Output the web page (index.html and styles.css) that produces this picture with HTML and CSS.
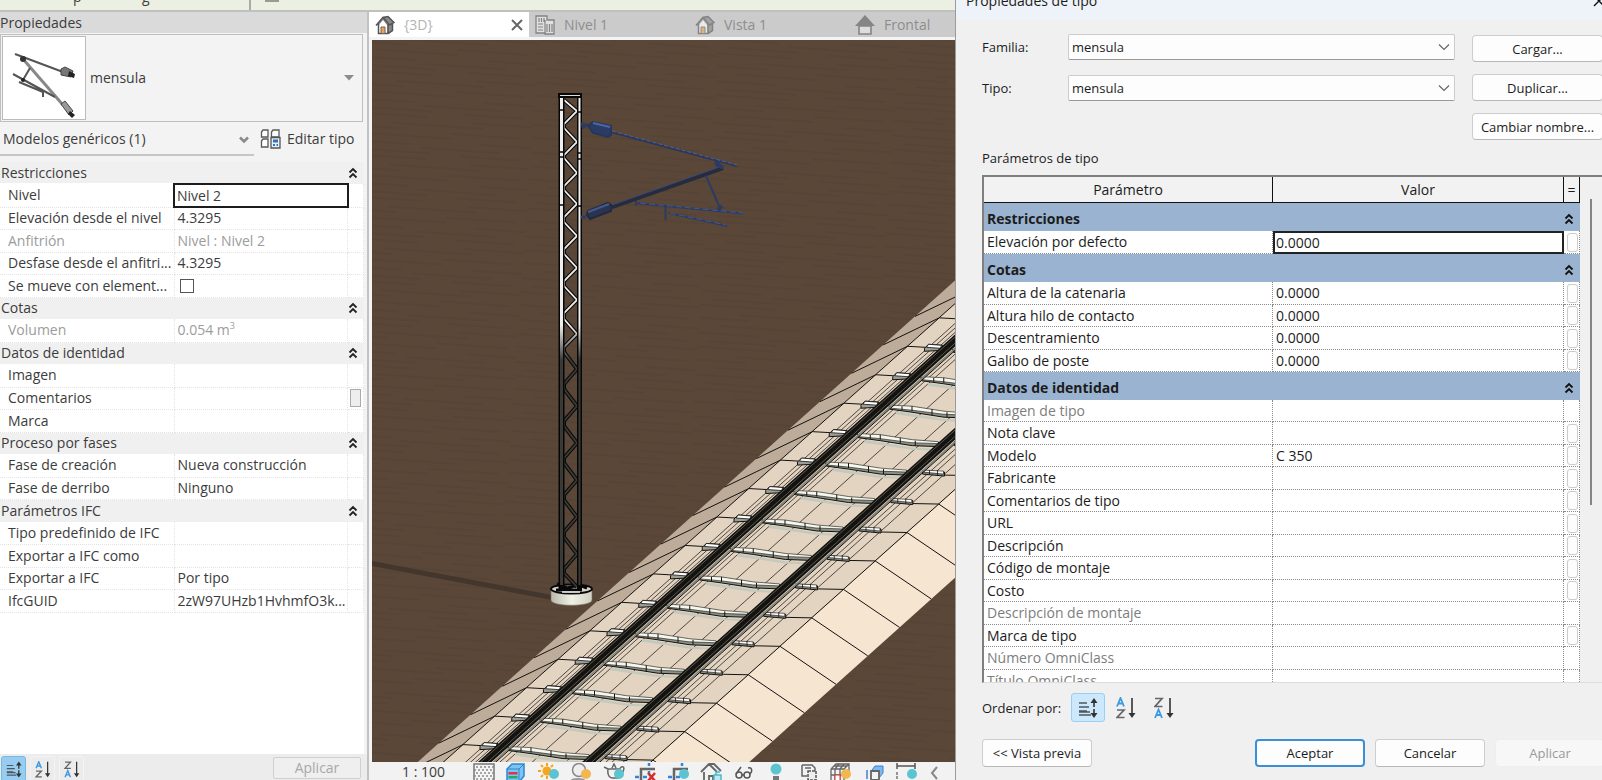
FILE: index.html
```html
<!DOCTYPE html>
<html lang="es">
<head>
<meta charset="utf-8">
<title>Propiedades de tipo</title>
<link rel="stylesheet" href="styles.css">
</head>
<body>
<svg class="defs" aria-hidden="true">
  <symbol id="i-collapse" viewBox="0 0 10 12"><path d="M1.500 5.500 5 2l3.500 3.500M1.500 10.500 5 7l3.500 3.500" fill="none" stroke="currentColor" stroke-width="1.800"/></symbol>
  <symbol id="i-chev" viewBox="0 0 12 8"><path d="M1 1.500 6 6.500 11 1.500" fill="none" stroke="currentColor" stroke-width="1.200"/></symbol>
  <symbol id="i-house" viewBox="0 0 20 20"><path d="M1 10 8 2l5-1 6 6-1.500 1v8L14 19H3V10z" fill="#8a8a8a"/><path d="M3.500 10.500 8 5l4.500 5.500V18h-9z" fill="#fff"/><path d="M1 10.500 8 2.500l6.500 7.500M3.500 9v9.500H13V9M8 2.500 13 1.500 19 7.500l-4.500 2.500M13 18.500l4.500-3V9" fill="none" stroke="#555" stroke-width="1.500"/><path d="M6 12h4v6.500H6z" fill="#f3a04c" stroke="#666"/></symbol>
  <symbol id="i-sort" viewBox="0 0 20 20"><path d="M1 5h8M1 9h10M1 13h8M1 17h12M1 14h11" stroke="#50565c" stroke-width="1.500"/><path d="M16 2v7M16 11v7" stroke="#333" stroke-width="1.600"/><path d="M16 0l3.500 5h-7zM16 20l3.500-5h-7z" fill="#333"/></symbol>
  <symbol id="i-az" viewBox="0 0 20 22"><path d="M1 9.500 4.500 1 8 9.500M2.200 6.500h4.600" fill="none" stroke="#3b9be0" stroke-width="1.800"/><path d="M1 13h7L1 20.500h7.500" fill="none" stroke="#666" stroke-width="1.700"/><path d="M16 1v17" stroke="#333" stroke-width="1.600"/><path d="M16 21l3.500-5h-7z" fill="#333"/></symbol>
  <symbol id="i-za" viewBox="0 0 20 22"><path d="M1 1.500h7L1 9.500h7.500" fill="none" stroke="#666" stroke-width="1.700"/><path d="M1 21 4.500 12.500 8 21M2.200 18h4.600" fill="none" stroke="#3b9be0" stroke-width="1.800"/><path d="M16 1v17" stroke="#333" stroke-width="1.600"/><path d="M16 21l3.500-5h-7z" fill="#333"/></symbol>
</svg>

<main class="screen">
  <div class="app">
    <div class="ribbon"><span class="ribbon-text">p</span><span class="ribbon-text">g</span><i class="ribbon-sep"></i><i class="ribbon-mark"></i></div>

    <section class="props">
      <h2 class="props-title">Propiedades</h2>
      <button class="type-picker">
        <svg class="thumb" viewBox="0 0 82 82"><g fill="none" stroke="#777" stroke-width="2"><path d="M12 17 60 35" stroke="#555"/><path d="M20 22 60 68" stroke="#888" stroke-width="3"/><path d="M27 31 20 43M10 37 52 60M16 45 40 55v5" stroke="#555"/></g><path d="m58 32 4-2 8 4-2 6-10-2z" fill="#777" stroke="#444"/><path d="m66 34 6 3-1 4-6-2z" fill="#222"/><path d="m58 67 4-3 8 10-4 4z" fill="#999" stroke="#444"/><path d="m67 74 5 4-3 3-4-4z" fill="#222"/><circle cx="20" cy="22" r="3" fill="#333"/><circle cx="20" cy="43" r="2" fill="#222"/></svg>
        <span class="type-name">mensula</span>
        <svg class="tri" viewBox="0 0 10 6"><path d="M0 0h10L5 5.500z" fill="#8c8c8c"/></svg>
      </button>
      <div class="filter-row">
        <div class="filter"><select aria-label="Filtro de elementos"><option>Modelos genéricos (1)</option></select><svg class="filter-arrow" viewBox="0 0 12 8"><path d="M2 1.500 6 5.500 10 1.500" fill="none" stroke="#8a8a8a" stroke-width="2.600"/></svg></div>
        <button class="edit-type"><svg viewBox="0 0 21 20"><g fill="#fff" stroke="#5a5a5a" stroke-width="1.300"><path d="M1.500 3 3 1h5v7H1.500zM11.500 3 13 1h6v7h-7.500zM1.500 12 3 10h5v8H1.500z"/></g><path d="M11 8.500h9V19h-9z" fill="#eee" stroke="#555" stroke-width="1.300"/><path d="M13 10.500h5v3h-5z" fill="#2674c4"/><path d="M13 15h2v2h-2zM16.500 15h1.500v2h-1.500z" fill="#2674c4"/></svg>Editar tipo</button>
      </div>

      <div class="props-body">
      <table class="grid">
        <colgroup><col class="c-name"><col><col class="c-btn"></colgroup>
        <tr class="sec"><th colspan="2">Restricciones</th><td><svg><use href="#i-collapse"/></svg></td></tr>
        <tr><th>Nivel</th><td class="boxed"><input value="Nivel 2" aria-label="Nivel"></td><td></td></tr>
        <tr><th>Elevación desde el nivel</th><td>4.3295</td><td></td></tr>
        <tr class="off"><th>Anfitrión</th><td>Nivel : Nivel 2</td><td></td></tr>
        <tr><th>Desfase desde el anfitri...</th><td>4.3295</td><td></td></tr>
        <tr><th>Se mueve con element...</th><td class="tick"><input type="checkbox" aria-label="Se mueve con elementos"></td><td></td></tr>
        <tr class="sec"><th colspan="2">Cotas</th><td><svg><use href="#i-collapse"/></svg></td></tr>
        <tr class="off"><th>Volumen</th><td>0.054 m<sup>3</sup></td><td></td></tr>
        <tr class="sec"><th colspan="2">Datos de identidad</th><td><svg><use href="#i-collapse"/></svg></td></tr>
        <tr><th>Imagen</th><td></td><td></td></tr>
        <tr><th>Comentarios</th><td></td><td><button class="assoc" aria-label="Asociar"></button></td></tr>
        <tr><th>Marca</th><td></td><td></td></tr>
        <tr class="sec"><th colspan="2">Proceso por fases</th><td><svg><use href="#i-collapse"/></svg></td></tr>
        <tr><th>Fase de creación</th><td>Nueva construcción</td><td></td></tr>
        <tr><th>Fase de derribo</th><td>Ninguno</td><td></td></tr>
        <tr class="sec"><th colspan="2">Parámetros IFC</th><td><svg><use href="#i-collapse"/></svg></td></tr>
        <tr><th>Tipo predefinido de IFC</th><td></td><td></td></tr>
        <tr><th>Exportar a IFC como</th><td></td><td></td></tr>
        <tr><th>Exportar a IFC</th><td>Por tipo</td><td></td></tr>
        <tr><th>IfcGUID</th><td>2zW97UHzb1HvhmfO3k...</td><td></td></tr>
      </table>
      </div>
      <footer class="props-foot">
        <button class="sort on" aria-label="Sin ordenar"><svg><use href="#i-sort"/></svg></button>
        <button class="sort" aria-label="Ascendente"><svg><use href="#i-az"/></svg></button>
        <button class="sort" aria-label="Descendente"><svg><use href="#i-za"/></svg></button>
        <button class="apply" disabled>Aplicar</button>
      </footer>
    </section>

    <section class="view">
      <nav class="tabs">
        <a class="tab active" href="#v3d"><svg><use href="#i-house"/></svg><span>{3D}</span><svg class="close" viewBox="0 0 12 12"><path d="M1 1l10 10M11 1 1 11" stroke="#666" stroke-width="2"/></svg></a>
        <a class="tab" href="#nivel"><svg class="dim" viewBox="0 0 20 20"><path d="M1 1h11v4h7v14H10v-1H1z" fill="#eee" stroke="#555" stroke-width="1.300"/><path d="M4 3v4M6.500 3v4M9 3v4M3 9h5M3 12h5M3 15h5M12 9v8M14.500 9v8M17 9v8M10 5v13" stroke="#555" stroke-width="1.200"/></svg><span>Nivel 1</span></a>
        <a class="tab" href="#vista"><svg class="dim"><use href="#i-house"/></svg><span>Vista 1</span></a>
        <a class="tab" href="#frontal"><svg viewBox="0 0 20 20"><path d="M10 0 20 11H0z" fill="#858585"/><path d="M4 11h12v8H4z" fill="#ddd" stroke="#858585" stroke-width="1.600"/></svg><span>Frontal</span></a>
      </nav>
      <svg class="scene" viewBox="372 40 583 722" preserveAspectRatio="xMinYMin slice" role="img" aria-label="Vista 3D de la vía y el poste">
        <defs>
          <pattern id="soil" width="180" height="42" patternUnits="userSpaceOnUse" patternTransform="rotate(4)"><path fill="#5a4738" d="M0 0h180v42H0z"/><path d="M0 3h75M120 6h60M40 11h90M0 16h50M100 18h70M20 23h80M130 27h50M0 31h60M70 34h80M10 39h70M110 40h60" stroke="#56443500" stroke-width="2"/><path d="M0 3h75M120 6h60M40 11h90M0 16h50M100 18h70M20 23h80M130 27h50M0 31h60M70 34h80M10 39h70M110 40h60" stroke="#554335" stroke-width="1.500"/></pattern>
          <linearGradient id="steel" gradientUnits="userSpaceOnUse" x1="0" y1="325" x2="0" y2="360"><stop offset="0" stop-color="#eee"/><stop offset="1" stop-color="#3a3a36"/></linearGradient>
          <linearGradient id="base" x1="0" x2="1" y1="0" y2="0"><stop offset="0" stop-color="#b9b8ab"/><stop offset=".5" stop-color="#f1f0e6"/><stop offset="1" stop-color="#d0cfc2"/></linearGradient>
          <path id="par" d="M318-285-318 285"/>
          <g id="tile" stroke="#15120f" stroke-width="1">
            <path d="M-56 27 0 0l-32 28.500M0 0l18 1M164 15l26 .5-32 28.500M190 15.500l56 38" fill="none"/>
            <path d="M52 8l50 8 24 1v2l-26-1-48-7z" fill="#c4c9bd" stroke="none"/>
            <path d="m17 2 4-4 14 1v5l-18 1z" fill="#9a9e94"/><path d="m21-2 13 1-1 3-14-1z" fill="#fff" stroke-width=".8"/>
            <path d="m45 3 23 1 32 5 27 2v4l-27-1-32-5-22-3z" fill="#8c9188"/><path d="m47 2 21 1 32 5 26 2v2l-27-1-31-4-21-2z" fill="#f4f8ee" stroke-width=".6"/><path d="M68 3v5M88 6v6M103 9v5M58 3v4" fill="none"/>
          </g>
          <g id="clip" stroke="#15120f">
            <path d="m142 10 22 2v4l-22-2z" fill="#858a80"/><path d="m144 10 19 1v3l-20-2z" fill="#fafafa" stroke-width=".6"/><path d="M149 10v4M157 10v5" fill="none" stroke-width=".8"/>
          </g>
          <g id="row"><use href="#tile"/><use href="#clip"/></g>
          <g id="rows4"><use href="#row"/><use href="#row" transform="translate(-31.750 28.450)"/><use href="#row" transform="translate(-63.500 56.900)"/><use href="#row" transform="translate(-95.250 85.350)"/></g>
        </defs>
        <path fill="url(#soil)" d="M372 40h1400v1200H372z"/>
        <path d="M372 561 552 595v5L372 566z" fill="#43362d"/>
        <g transform="translate(717 517)">
          <path d="M262-258-374 312h56L318-285z" fill="#bdac9a"/>
          <path d="M318-285-318 285l190 15.500L508-269.500z" fill="#e3d4c2"/>
          <path d="M508-269.500-128 300.500l56 38L564-231.500z" fill="#f5e5d1"/>
          <g fill="none" stroke="#2b2520" stroke-width=".8">
            <use href="#par" x="21" y="1"/><use href="#par" x="26" y="1"/><use href="#par" x="31" y="1"/>
            <use href="#par" x="53" y="3"/><use href="#par" x="58" y="4"/><use href="#par" x="82" y="6"/><use href="#par" x="112" y="9"/>
            <use href="#par" x="149" y="12"/><use href="#par" x="154" y="13"/><use href="#par" x="164" y="14"/>
          </g>
          <use href="#rows4" transform="translate(254 -227.600)"/><use href="#rows4" transform="translate(127 -113.800)"/><use href="#rows4"/><use href="#rows4" transform="translate(-127 113.800)"/><use href="#rows4" transform="translate(-254 227.600)"/>
          <g fill="none">
            <g stroke="#14130f" stroke-width="9"><use href="#par" x="40" y="1"/><use href="#par" x="134" y="10"/></g>
            <g stroke="#6a6b60" stroke-width=".8"><use href="#par" x="36" y="1"/><use href="#par" x="43" y="1"/><use href="#par" x="130" y="10"/><use href="#par" x="137" y="10"/></g>
            <g stroke="#85857a" stroke-width="1.800"><use href="#par" x="48" y="2"/><use href="#par" x="142" y="11"/></g>
            <g stroke="#111" stroke-width="1"><use href="#par" x="50" y="2"/><use href="#par" x="144" y="11"/></g>
          </g>
        </g>
        <g class="mast">
          <path d="M551 589v11c0 7 41 7 41 0v-11z" fill="url(#base)" stroke="#77746a" stroke-width=".6"/>
          <ellipse cx="571.500" cy="589" rx="20.500" ry="4.500" fill="#d5d4ca" stroke="#080808" stroke-width="2"/>
          <path d="M557 584l10 4 12-3 8 3M556 590h26" stroke="#080808" stroke-width="3" fill="none"/><path d="M562 592h18" stroke="#eee" stroke-width="1.500"/>
          <g fill="none"><path d="M564 100l13 11-13 13v4l13 14-13 13v3l13 15-13 13v4l13 14-13 13v5l13 14-13 13v5l13 14-13 13v5l13 14-13 13v6l13 15-13 13v5l13 17-13 15v5l13 17-13 15v5l13 17-13 15v5l13 17-13 15v5l13 17-13 15v5l13 17-13 15v4l13 14" stroke="#0a0a0a" stroke-width="4"/>
          <path d="M564 100l13 11-13 13v4l13 14-13 13v3l13 15-13 13v4l13 14-13 13v5l13 14-13 13v5l13 14-13 13v5l13 14-13 13v6l13 15-13 13v5l13 17-13 15v5l13 17-13 15v5l13 17-13 15v5l13 17-13 15v5l13 17-13 15v5l13 17-13 15v4l13 14" stroke="url(#steel)" stroke-width="1.800"/></g>
          <path d="M558.500 94h6v495h-6zM577 94h5v495h-5z" fill="#070707"/>
          <path d="M560 95h3v490h-3zM578.500 95h2v490h-2z" fill="url(#steel)"/>
          <path d="M559 94h22v3h-22z" fill="#ddd" stroke="#080808" stroke-width="2"/>
          <path d="M559 110h5M559 152h5M559 157h5M559 205h5M577 112h5M577 153h5M577 159h5M577 206h5" stroke="#080808" stroke-width="1.500"/>
        </g>
        <g fill="none" stroke="#2c3b63" stroke-width="2">
          <path d="m611 132 126 34" stroke="#2a365a"/><path d="m612 131 125 34" stroke="#4865a6" stroke-width=".9" stroke-dasharray="4 2"/>
          <path d="m612 207 111-39" stroke="#262c3d" stroke-width="4"/><path d="m612 205 110-39" stroke="#3b4a75" stroke-width="1"/>
          <path d="m706 176 14 32M665.500 206v14M636 203l107 10.500M636 201v5M669 213l58 13"/><path d="m640 203 103 10M670 213l56 12" stroke="#4560a0" stroke-width=".8" stroke-dasharray="6 3"/>
          <path d="M715 162l8 6M717 161l1 6M718 210l4-4" stroke-width="4"/>
          <path d="M581 124l5 1-4 3M581 217h5" stroke-width="3"/>
          <path d="m588 126 5-4 18 4v9l-3 2-15-4z" fill="#2c3b63" stroke="#29365c"/><path d="m593 123 17 4" stroke="#4a67a8"/>
          <path d="m587 215 1-4 20-8 4 3-1 5-21 8z" fill="#2a3350" stroke="#232a40"/><path d="m588 212 21-8" stroke="#445a8f"/>
        </g>
      </svg>
      <div class="view-bar">
        <button class="scale">1 : 100</button>
        <svg viewBox="0 0 22 20"><path d="M1 1h20v18H1z" fill="#f4f4f4" stroke="#777" stroke-width="1.500"/><path d="M3 4h18M1 7h20M3 10h18M1 13h20M3 16h18" stroke="#8a8a8a" stroke-width="1.500" stroke-dasharray="2 2"/></svg>
        <svg viewBox="0 0 22 20"><path d="m2 6 5-5h12v12l-5 6H2z" fill="#7cc4f2" stroke="#2f86cc" stroke-width="1.500"/><path d="M14 6h-12M14 6l5-5M14 6v13" stroke="#2f86cc"/><path d="M3.500 9h9v2.500h-9z" fill="#d34"/><path d="M3.500 13h9v2.500h-9z" fill="#2a6"/></svg>
        <svg viewBox="0 0 22 20"><circle cx="9" cy="8" r="4.500" fill="#f8a51b"/><path d="M9 0v3M9 13v3M0 8h3M3 2l2 2M15 2l-2 2M3 14l2-2" stroke="#f8a51b" stroke-width="2"/><circle cx="16" cy="11" r="5" fill="#5bc4d0"/></svg>
        <svg viewBox="0 0 22 20"><ellipse cx="8" cy="17" rx="7" ry="2" fill="#999"/><circle cx="9" cy="7" r="6.500" fill="#eee" stroke="#888" stroke-width="1.500"/><circle cx="16" cy="11" r="5" fill="#f4b750"/></svg>
        <svg viewBox="0 0 22 20"><path d="M1 4l4 2c-1 7 2 9 5 9h5c3-4 3-7 2-9H5M17 5c5-4 5 3 1 6M9 5l2-4 2 4" fill="none" stroke="#666" stroke-width="1.500"/><circle cx="16" cy="11" r="5" fill="#5bc4d0"/></svg>
        <svg viewBox="0 0 22 20"><path d="M6 20V6h14" fill="none" stroke="#666" stroke-width="2.500"/><path d="M0 14h4M8 14h4M14 0v3M14 8v3" stroke="#2f86e0" stroke-width="2.500"/><path d="m13 10 7 8M20 10l-7 8" stroke="#d92b2b" stroke-width="2.500"/></svg>
        <svg viewBox="0 0 22 20"><path d="M6 20V6h14" fill="none" stroke="#666" stroke-width="2.500"/><path d="M0 14h4M8 14h4M14 0v3" stroke="#2f86e0" stroke-width="2.500"/><circle cx="16" cy="11" r="5" fill="#5bc4d0"/></svg>
        <svg viewBox="0 0 22 20"><path d="m1 9 8-8h5l7 7M4 9v10h5v-6h4v6M9 1l8 8" fill="none" stroke="#666" stroke-width="1.800"/><path d="M14 12h7v7h-7zM16 12V9h4" fill="#bdeaf0" stroke="#4fb9c8" stroke-width="1.500"/></svg>
        <svg viewBox="0 0 22 20"><g fill="none" stroke="#555" stroke-width="1.500"><circle cx="6" cy="12" r="3"/><circle cx="14" cy="12" r="3"/><path d="M3 11 8 4M17 11c3-3 2-7-2-6M9 12h2"/></g></svg>
        <svg viewBox="0 0 22 20"><circle cx="11" cy="6" r="5.500" fill="#5bc4d0"/><path d="M8 13h6v5H8z" fill="#777"/></svg>
        <svg viewBox="0 0 22 20"><path d="M4 2h10l3 3v5M4 2v11h5M7 5h6" fill="none" stroke="#666" stroke-width="1.500"/><path d="M10 8h8v9h-8z" fill="#eee" stroke="#555" stroke-width="1.500" stroke-dasharray="3 1"/></svg>
        <svg viewBox="0 0 22 20"><path d="m1 6 5-5h13v9M1 6h13v13M1 6v13M5 6v13M10 6v13M1 12h13M5 6l4-5M10 6l4-5M14 6l5-5M4 3h13" fill="none" stroke="#666" stroke-width="1.300"/><path d="M5 12h5v7H5z" fill="#fff" stroke="#d33"/><circle cx="16" cy="11" r="5" fill="#f4b750"/></svg>
        <svg viewBox="0 0 22 20"><path d="m9 7 3-4h8v7l-4 5" fill="#7bb9f0" stroke="#3b82cc"/><path d="M8 8h8v9H8z" fill="#f4f4f4" stroke="#666" stroke-width="1.800"/><path d="M4 7v9" stroke="#3b82cc" stroke-width="1.500"/></svg>
        <svg viewBox="0 0 22 20"><path d="M2 0v6M20 0v6M2 3h18" stroke="#555" stroke-width="1.500"/><path d="M2 9v10h14" fill="none" stroke="#777" stroke-width="1.500" stroke-dasharray="3 1"/><circle cx="17" cy="11" r="5" fill="#5bc4d0"/></svg>
        <svg class="narrow" viewBox="0 0 12 20"><path d="M9 4 4 10l5 6" fill="none" stroke="#888" stroke-width="2"/></svg>
      </div>
    </section>
  </div>

  <section class="dialog" role="dialog" aria-label="Propiedades de tipo">
    <header class="dlg-title"><span>Propiedades de tipo</span><button aria-label="Cerrar"><svg viewBox="0 0 12 12"><path d="M1 1l10 10M11 1 1 11" stroke="#111" stroke-width="1.400"/></svg></button></header>
    <div class="dlg-body">
      <div class="form">
        <div class="fields">
          <label for="fam">Familia:</label><div class="combo"><select id="fam"><option>mensula</option></select><svg><use href="#i-chev"/></svg></div>
          <label for="tip">Tipo:</label><div class="combo"><select id="tip"><option>mensula</option></select><svg><use href="#i-chev"/></svg></div>
        </div>
        <div class="side"><button class="btn">Cargar...</button><button class="btn">Duplicar...</button><button class="btn">Cambiar nombre...</button></div>
      </div>
      <p class="caption">Parámetros de tipo</p>
      <div class="tbl-box">
        <table class="params">
          <colgroup><col class="p-name"><col><col class="p-btn"></colgroup>
          <thead><tr><th>Parámetro</th><th>Valor</th><th>=</th></tr></thead>
          <tbody>
          <tr class="sec"><th colspan="2">Restricciones</th><td><svg><use href="#i-collapse"/></svg></td></tr>
          <tr><th>Elevación por defecto</th><td class="boxed"><input value="0.0000" aria-label="Elevación por defecto"></td><td><button aria-label="Asociar"></button></td></tr>
          <tr class="sec"><th colspan="2">Cotas</th><td><svg><use href="#i-collapse"/></svg></td></tr>
          <tr><th>Altura de la catenaria</th><td>0.0000</td><td><button aria-label="Asociar"></button></td></tr>
          <tr><th>Altura hilo de contacto</th><td>0.0000</td><td><button aria-label="Asociar"></button></td></tr>
          <tr><th>Descentramiento</th><td>0.0000</td><td><button aria-label="Asociar"></button></td></tr>
          <tr><th>Galibo de poste</th><td>0.0000</td><td><button aria-label="Asociar"></button></td></tr>
          <tr class="sec"><th colspan="2">Datos de identidad</th><td><svg><use href="#i-collapse"/></svg></td></tr>
          <tr class="off"><th>Imagen de tipo</th><td></td><td></td></tr>
          <tr><th>Nota clave</th><td></td><td><button aria-label="Asociar"></button></td></tr>
          <tr><th>Modelo</th><td>C 350</td><td><button aria-label="Asociar"></button></td></tr>
          <tr><th>Fabricante</th><td></td><td><button aria-label="Asociar"></button></td></tr>
          <tr><th>Comentarios de tipo</th><td></td><td><button aria-label="Asociar"></button></td></tr>
          <tr><th>URL</th><td></td><td><button aria-label="Asociar"></button></td></tr>
          <tr><th>Descripción</th><td></td><td><button aria-label="Asociar"></button></td></tr>
          <tr><th>Código de montaje</th><td></td><td><button aria-label="Asociar"></button></td></tr>
          <tr><th>Costo</th><td></td><td><button aria-label="Asociar"></button></td></tr>
          <tr class="off"><th>Descripción de montaje</th><td></td><td></td></tr>
          <tr><th>Marca de tipo</th><td></td><td><button aria-label="Asociar"></button></td></tr>
          <tr class="off"><th>Número OmniClass</th><td></td><td></td></tr>
          <tr class="off"><th>Título OmniClass</th><td></td><td></td></tr>
          </tbody>
        </table>
        <div class="scroll"><i></i></div>
      </div>
      <div class="order"><span>Ordenar por:</span>
        <button class="sort on" aria-label="Sin ordenar"><svg><use href="#i-sort"/></svg></button>
        <button class="sort" aria-label="Ascendente"><svg><use href="#i-az"/></svg></button>
        <button class="sort" aria-label="Descendente"><svg><use href="#i-za"/></svg></button>
      </div>
      <div class="actions"><button class="btn">&lt;&lt; Vista previa</button><button class="btn primary">Aceptar</button><button class="btn">Cancelar</button><button class="btn" disabled>Aplicar</button></div>
    </div>
  </section>
</main>
</body>
</html>
```
FILE: styles.css
```css
* { box-sizing: border-box; }
body { margin: 0; overflow: hidden; font: 14px/20px "Open Sans", "Noto Sans", sans-serif; color: #3c3c3c; background: #f0f0f0; }
button, input, select { font: inherit; color: inherit; border: 0; background: none; padding: 0; margin: 0; border-radius: 0; appearance: none; outline: 0; }
h2, p { margin: 0; }
svg { display: block; flex: none; }
.defs { position: absolute; width: 0; height: 0; }
.screen { display: grid; grid-template-columns: 955fr 647fr; height: 100vh; }

/* Application window */
.app { min-width: 0; min-height: 0; display: grid; grid-template-columns: 369fr 586fr; grid-template-rows: 12px minmax(0, 1fr); background: #f4f4f4; }
.ribbon { grid-column: 1 / -1; display: flex; align-items: flex-end; background: #ebf0e3; border-bottom: 2px solid #c0c0c0; overflow: hidden; padding-left: 73px; }
.ribbon-text { width: 69px; line-height: 14px; height: 14px; margin-bottom: 6px; }
.ribbon-sep { width: 2px; height: 10px; margin-left: 38px; background: #aaa; }
.ribbon-mark { width: 14px; height: 2px; margin: 0 0 8px 14px; background: #999; }

/* Properties palette */
.props { min-width: 0; display: flex; flex-direction: column; border-right: 2px solid #c2c2c2; background: #f3f3f3; overflow: hidden; }
.props-title { font-size: 14px; font-weight: 400; line-height: 22px; height: 21px; background: #dadada; }
.type-picker { display: flex; align-items: center; height: 88px; margin: 1px 4px 0 0; padding: 0 8px 0 2px; border: 1px solid #bfbfbf; text-align: left; }
.thumb { width: 82px; height: 82px; background: #fff; outline: 1px solid #bbb; }
.type-name { flex: 1; padding-left: 5px; }
.tri { width: 10px; height: 6px; }
.filter-row { display: flex; align-items: center; gap: 6px; height: 34px; }
.filter { flex: 0 0 254px; position: relative; height: 34px; border-bottom: 2px solid #c6c6c6; }
.filter select { width: 100%; height: 34px; padding-left: 3px; }
.filter-arrow { position: absolute; right: 4px; top: 14px; width: 12px; height: 8px; }
.edit-type { display: flex; align-items: center; gap: 6px; }
.edit-type svg { width: 21px; height: 20px; }
.props-body { flex: 1; min-height: 0; overflow: hidden; margin: 6px 3px 0 0; background: #fff; }
.grid { width: 100%; table-layout: fixed; border-collapse: collapse; }
.c-name { width: 174px; }
.c-btn { width: 16px; }
.grid tr { height: 22px; }
.grid tr:nth-child(even) { height: 23px; }
.grid th, .grid td { padding: 0; font-weight: 400; text-align: left; line-height: 18px; white-space: nowrap; overflow: hidden; border-bottom: 1px dotted #e4e4e4; border-right: 1px dotted #e4e4e4; }
.grid th { padding-left: 8px; }
.grid td { padding-left: 3px; }
.grid .sec { background: #f0f0f0; }
.grid .sec th, .grid .sec td { border: 0; }
.grid .sec th { padding-left: 1px; }
.grid .sec td { padding: 0; }
.grid .sec svg { width: 10px; height: 12px; color: #222; }
.grid .off { color: #9c9c9c; }
.grid td.boxed { padding: 0; border: 2px solid #1c1c1c; }
.grid .boxed input { display: block; width: 100%; height: 18px; padding-left: 2px; }
.grid .tick { padding-left: 5px; }
.tick input { display: block; width: 14px; height: 14px; background: #fff; border: 1px solid #555; }
.grid sup { font-size: 9px; line-height: 0; }
.assoc { display: block; width: 11px; height: 18px; border: 1px solid #aaa; background: #eee; }
.grid td:last-child { padding-left: 2px; }
.grid .sec td:last-child { padding-left: 0; }
.props-foot { display: flex; gap: 4px; height: 26px; padding: 2px 6px 0 1px; background: #ececec; }
.sort { display: flex; align-items: center; justify-content: center; border: 1px solid transparent; border-radius: 3px; }
.props-foot .sort { width: 25px; height: 26px; border-color: #f4f4f4; }
.props-foot .sort svg { width: 16px; height: 17px; }
.props-foot .sort.on { background: #97cdf0; border-color: #7ab8e2; }
.apply { flex: none; margin: 1px 0 0 auto; width: 88px; height: 22px; border: 1px solid #cfcfcf; border-radius: 2px; background: #efefef; color: #a8a8a8; }

/* Drawing view */
.view { min-width: 0; min-height: 0; display: grid; grid-template-rows: 25px minmax(0, 1fr) 18px; overflow: hidden; background: #f4f4f4; }
.tabs { display: flex; background: #cbcbcb; overflow: hidden; }
.tab { flex: 0 0 160px; display: flex; align-items: center; gap: 9px; padding: 1px 6px 0 6px; color: #8e8e8e; text-decoration: none; }
.tab svg { width: 20px; height: 20px; }
.tab .dim { opacity: .6; }
.tab.active { background: #fff; color: #b4b4b4; }
.tab .close { width: 12px; height: 12px; margin-left: auto; }
.scene { width: calc(100% - 3px); height: calc(100% - 3px); margin: 3px 0 0 3px; }
.view-bar { display: flex; justify-content: space-between; align-items: flex-start; height: 18px; padding: 1px 15px 0 33px; background: #f2f2f2; }
.view-bar svg { width: 22px; height: 20px; }
.view-bar .narrow { width: 12px; }
.scale { width: 60px; height: 17px; line-height: 17px; text-align: left; }

/* Type properties dialog */
.dialog { min-width: 0; min-height: 0; display: flex; flex-direction: column; overflow: hidden; border-left: 1px solid #9a9a9a; background: #f0f0f0; color: #1c1c1c; }
.dlg-title { flex: none; display: flex; justify-content: space-between; align-items: flex-end; height: 20px; margin-right: -3px; padding: 0 0 9px 10px; background: #eef3f9; }
.dlg-title svg { width: 12px; height: 12px; margin-bottom: 4px; }
.dlg-body { flex: 1; min-height: 0; display: flex; flex-direction: column; padding: 14px 0 13px 26px; font-size: 13px; }
.form { display: flex; gap: 17px; margin-right: -1px; }
.fields { flex: 1; display: grid; grid-template-columns: 86px 1fr; grid-auto-rows: 26px; row-gap: 15px; align-items: center; }
.combo { position: relative; }
.combo select { display: block; width: 100%; height: 26px; padding-left: 3px; background: #fdfdfd; border: 1px solid #ccc; border-bottom-color: #999; border-radius: 2px; }
.combo svg { position: absolute; right: 5px; top: 9px; width: 12px; height: 8px; color: #666; }
.side { display: grid; gap: 12px; padding-top: 1px; }
.btn { width: 131px; height: 27px; border: 1px solid #cdcdcd; border-bottom-color: #b8b8b8; border-radius: 4px; background: #fdfdfd; text-align: center; }
.caption { margin-top: 8px; height: 27px; }
.tbl-box { flex: 1; min-height: 0; display: flex; border: 2px solid #7f7f7f; border-width: 2px 0 0 2px; overflow: hidden; font-size: 14px; border-bottom: 1px solid #ddd; }
.params { flex: 1; align-self: flex-start; width: 100%; table-layout: fixed; border-collapse: separate; border-spacing: 0; background: #fff; }
.p-name { width: 289px; }
.p-btn { width: 16px; }
.params th, .params td { padding: 0 0 0 3px; font-weight: 400; text-align: left; line-height: 20px; white-space: nowrap; overflow: hidden; border: 0 dotted #8a8a8a; border-width: 0 1px 1px 0; }
.params thead th { height: 26px; padding: 0; text-align: center; background: #f2f2f2; border: 0 solid #111; border-width: 0 1px 1px 0; }
.params tbody tr { height: 22px; }
.params tbody tr:nth-child(even) { height: 23px; }
.params tbody tr.sec { height: 28px; }
.params .sec th, .params .sec td { background: #9ab3d1; border: 0; padding-top: 3px; }
.params .sec th { font-weight: 700; }
.params .sec td { padding-left: 0; }
.params .sec svg { width: 10px; height: 12px; color: #111; }
.params .off { color: #7d7d7d; }
.params td.boxed { padding: 0; border: 2px solid #222; }
.params .boxed input { display: block; width: 100%; height: 18px; padding-left: 1px; }
.params td button { display: block; width: 11px; height: 19px; border: 1px solid #ccc; border-radius: 3px; background: #fdfdfd; }
.scroll { flex: 0 0 22px; display: flex; justify-content: center; padding-top: 22px; }
.scroll i { width: 2px; height: 306px; background: #858585; }
.order { display: flex; align-items: center; gap: 4px; padding-top: 10px; height: 39px; }
.order .sort { width: 34px; height: 29px; }
.order span { padding-right: 6px; }
.order .sort svg { width: 20px; height: 22px; }
.order .sort.on { background: #cbe8fd; border-color: #99cff5; }
.actions { display: flex; gap: 10px; padding-top: 17px; margin-right: -3px; }
.actions .btn { width: 110px; height: 28px; }
.actions .primary { margin-left: auto; border: 2px solid #3a8fd6; }
.actions .btn:disabled { border-color: #eee; background: #f7f7f7; color: #9a9a9a; }
```
